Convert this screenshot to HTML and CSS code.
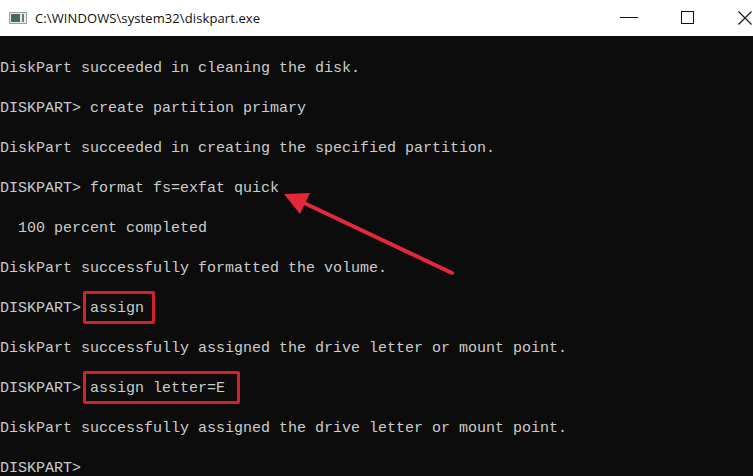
FILE: index.html
```html
<!DOCTYPE html>
<html>
<head>
<meta charset="utf-8">
<link rel="stylesheet" href="styles.css">
</head>
<body>
<div class="window">
  <div class="titlebar">
    <div class="title-left">
      <svg class="app-icon" width="18" height="12" viewBox="0 0 18 12">
        <rect x="0.5" y="0.5" width="17" height="11" fill="#e9ecea" stroke="#9aa39e"/>
        <rect x="2" y="2" width="9" height="8" fill="#476a5a"/>
        <rect x="13" y="2" width="2" height="8" fill="#6f7f77"/>
      </svg>
      <span class="title">C:\WINDOWS\system32\diskpart.exe</span>
    </div>
    <svg class="controls" width="135" height="36" viewBox="0 0 135 36">
      <line x1="2" y1="17.5" x2="20" y2="17.5" stroke="#111" stroke-width="1"/>
      <rect x="63.5" y="11.5" width="12" height="12" fill="none" stroke="#111" stroke-width="1"/>
      <path d="M120.5 11.5 L133.5 24.5 M133.5 11.5 L120.5 24.5" stroke="#111" stroke-width="1.1"/>
    </svg>
  </div>
  <pre class="console">DiskPart succeeded in cleaning the disk.

DISKPART&gt; create partition primary

DiskPart succeeded in creating the specified partition.

DISKPART&gt; format fs=exfat quick

  100 percent completed

DiskPart successfully formatted the volume.

DISKPART&gt; <span class="hl hl-short">assign</span>

DiskPart successfully assigned the drive letter or mount point.

DISKPART&gt; <span class="hl hl-long">assign letter=E</span>

DiskPart successfully assigned the drive letter or mount point.

DISKPART&gt;</pre>
  <svg class="annot" width="753" height="476" viewBox="0 0 753 476">
    <line x1="452" y1="273" x2="302" y2="202" stroke="#e2283a" stroke-width="4" stroke-linecap="round"/>
    <polygon points="284,194 310,193 300,214" fill="#e2283a"/>
  </svg>
</div>
</body>
</html>
```
FILE: styles.css
```css
html, body {
  margin: 0;
  padding: 0;
  background: #0c0c0c;
}
.window {
  position: relative;
  width: 753px;
  height: 476px;
  overflow: hidden;
  display: flex;
  flex-direction: column;
}
.titlebar {
  height: 36px;
  flex: 0 0 36px;
  background: #ffffff;
  display: flex;
  align-items: center;
  justify-content: space-between;
}
.title-left {
  display: flex;
  align-items: center;
  padding-left: 9px;
  gap: 8px;
}
.app-icon {
  display: block;
}
.title {
  font-family: "Open Sans", "Noto Sans", sans-serif;
  font-size: 13px;
  color: #111;
  letter-spacing: 0.1px;
}
.controls {
  display: block;
  flex: 0 0 auto;
}
.console {
  margin: 0;
  padding: 23px 0 0 0;
  flex: 1 1 auto;
  background: #0c0c0c;
  color: #cccccc;
  font-family: "Liberation Mono", "DejaVu Sans Mono", monospace;
  font-size: 15px;
  line-height: 20px;
  white-space: pre;
  overflow: hidden;
}
.hl {
  position: relative;
  display: inline-block;
  height: 20px;
  vertical-align: top;
}
.hl::after {
  content: "";
  position: absolute;
  left: -7px;
  top: -8px;
  bottom: -5px;
  border: 3px solid #d3212f;
  border-radius: 2px;
}
.hl-short::after {
  right: -11px;
}
.hl-long::after {
  right: -15px;
}
.annot {
  position: absolute;
  left: 0;
  top: 0;
  pointer-events: none;
}
```
